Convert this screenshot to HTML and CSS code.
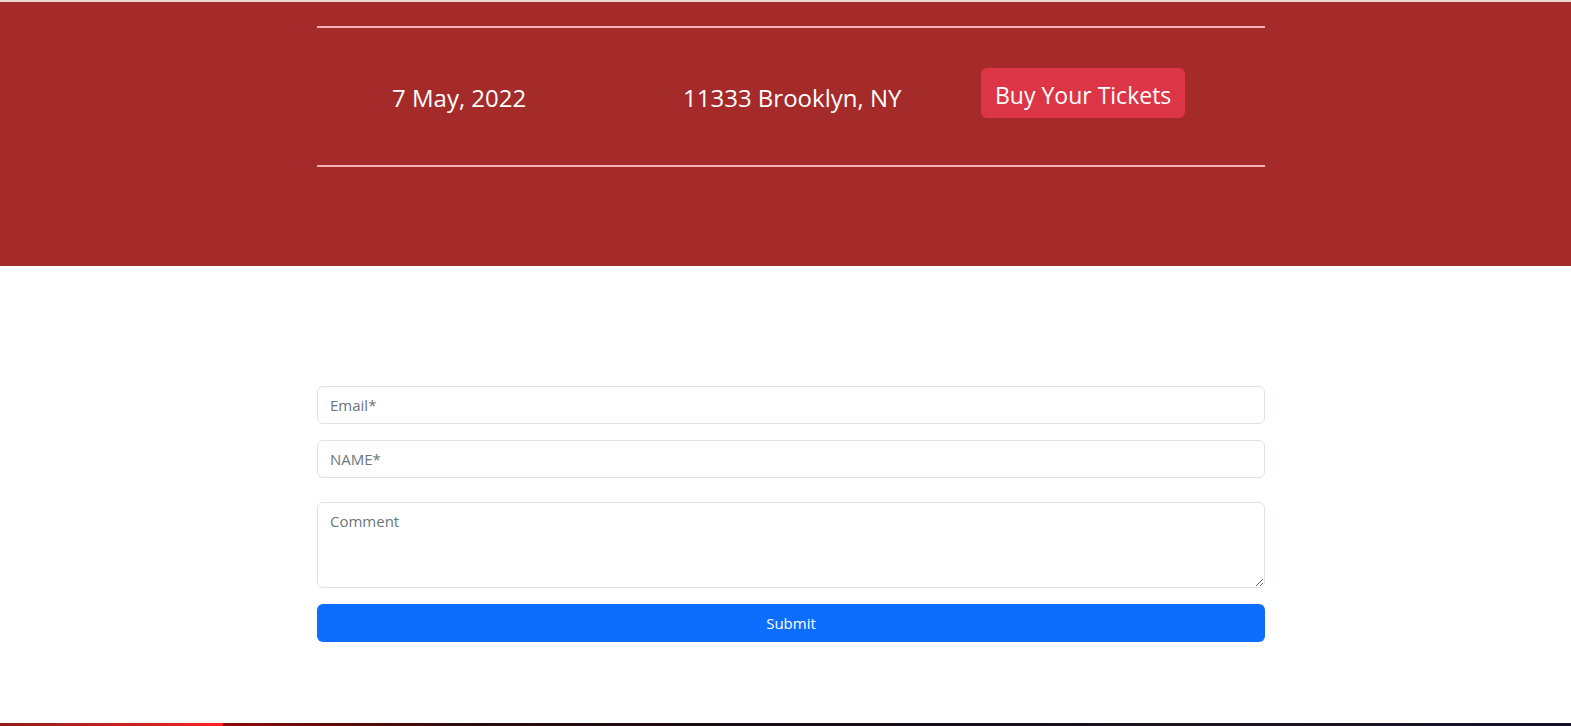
FILE: index.html
```html
<!DOCTYPE html>
<html lang="en">
<head>
<meta charset="utf-8">
<title>Event</title>
<link rel="stylesheet" href="styles.css">
</head>
<body>
<div class="topstrip"></div>
<section class="hero">
  <div class="container">
    <div class="rule"></div>
    <div class="info">
      <div class="cell cell-date"><span class="info-text">7 May, 2022</span></div>
      <div class="cell cell-addr"><span class="info-text">11333 Brooklyn, NY</span></div>
      <div class="cell cell-btn"><a class="btn-tickets" href="#">Buy Your Tickets</a></div>
    </div>
    <div class="rule"></div>
  </div>
</section>
<section class="contact">
  <form class="container form">
    <input class="field" type="email" placeholder="Email*">
    <input class="field" type="text" placeholder="NAME*">
    <textarea class="field area" placeholder="Comment"></textarea>
    <button class="submit" type="button">Submit</button>
  </form>
</section>
<footer class="footer"></footer>
</body>
</html>
```
FILE: styles.css
```css
* { box-sizing: border-box; }
html, body { margin: 0; padding: 0; }
body {
  font-family: "Open Sans", "Noto Sans", sans-serif;
  background: #fff;
  color: #212529;
}
.topstrip { height: 2px; background: #e9d8c7; }
.hero {
  background: #a52a2a;
  padding: 24px 0 99px;
}
.container {
  width: 948px;
  margin-left: calc(50% - 468.5px);
}
.rule { height: 2px; background: #f4b0b7; }
.info {
  display: grid;
  grid-template-columns: 316px 316px 316px;
  height: 137px;
  align-items: start;
}
.cell { display: flex; }
.info-text {
  color: #fff;
  font-size: 24px;
  line-height: 1.2;
}
.cell-date { padding: 56px 0 0 75px; }
.cell-addr { padding: 56px 0 0 50px; }
.cell-btn { padding: 40px 0 0 32px; }
.btn-tickets {
  display: inline-flex;
  align-items: center;
  height: 50px;
  padding: 3px 14px 0;
  background: #dc3545;
  color: #fff;
  text-decoration: none;
  font-size: 23px;
  border-radius: 6px;
}
.contact { padding: 120px 0 81px; }
.form { display: flex; flex-direction: column; }
.field {
  display: block;
  width: 100%;
  height: 38px;
  padding: 6px 12px;
  border: 1px solid #dee2e6;
  border-radius: 6px;
  font-family: "Open Sans", "Noto Sans", sans-serif;
  font-size: 15px;
  color: #212529;
  background: #fff;
  margin-bottom: 16px;
}
.field::placeholder { color: #6c757d; }
.field + .area { margin-top: 8px; padding-top: 8px; }
.area { height: 86px; resize: vertical; }
.submit {
  height: 38px;
  width: 100%;
  border: 0;
  border-radius: 6px;
  background: #0d6efd;
  color: #fff;
  font-family: "Open Sans", "Noto Sans", sans-serif;
  font-size: 15px;
}
.footer {
  height: 200px;
  background: linear-gradient(90deg, #8e1c18 0%, #b02420 5%, #d42222 10%, #ff2222 14.2%, #8c0808 14.2%, #5c0a0a 22%, #2a0c0c 30%, #1a0a12 45%, #160c1a 60%, #1e1420 75%, #141028 100%);
}
```
